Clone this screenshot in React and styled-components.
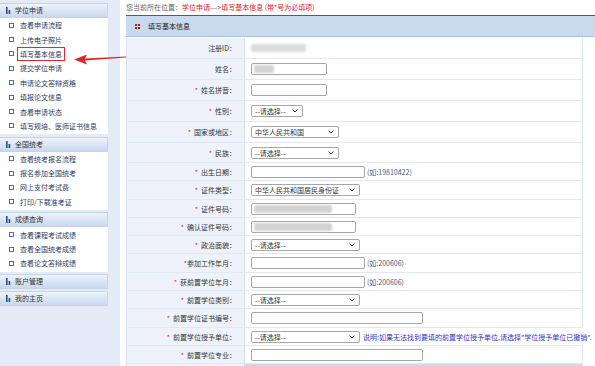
import React from 'react';
import styled, { createGlobalStyle } from 'styled-components';

const GlobalStyle = createGlobalStyle`
  html, body { margin: 0; padding: 0; background: #fff; }
  body { font-family: "Noto Sans CJK SC", "Noto Sans", sans-serif; font-size: 7px; color: #333; }
  * { box-sizing: border-box; }
`;

const Page = styled.div`
  position: relative;
  display: flex;
  width: 595px;
  height: 366px;
  overflow: hidden;
`;

const Sidebar = styled.aside`
  flex: none;
  width: 120px;
  height: 366px;
  background: #e4ebf6;
  padding: 3px 12px 0 0;
`;

const Group = styled.div`
  margin-bottom: 2.4px;
  background: #fff;
`;

const GroupHeader = styled.div`
  height: 15px;
  display: flex;
  align-items: center;
  gap: 4px;
  padding-left: 6px;
  background: linear-gradient(#eef3fb, #c8d8ee);
  border: 1px solid #c4d4ea;
  border-left: none;
  color: #333;
  font-size: 7px;
  line-height: 1;
`;

const ItemList = styled.ul`
  list-style: none;
  margin: 0;
  padding: 0 0 1px;
`;

const Item = styled.li`
  height: 14.4px;
  display: flex;
  align-items: center;
  padding-left: 9px;
  color: #2c3d60;
  font-size: 7px;
`;

const Bullet = styled.span`
  width: 5px;
  height: 5px;
  border: 1px solid #4a6ea8;
  margin-right: 6px;
  flex: none;
`;

const ItemText = styled.span`
  display: inline-flex;
  align-items: center;
  height: 14px;
  padding: 0 2px;
  margin-left: -3px;
  border: 1px solid ${p => (p.$marked ? '#e8262a' : 'transparent')};
`;

const Main = styled.main`
  flex: 1;
  min-width: 0;
  padding-left: 6px;
  background: #fff;
`;

const Breadcrumb = styled.div`
  height: 15px;
  padding-top: 2px;
  line-height: 10px;
  color: #666;
  font-size: 7px;
`;

const Red = styled.span`
  color: #e5232a;
`;

const PanelHeader = styled.div`
  height: 22px;
  display: flex;
  align-items: center;
  gap: 8px;
  padding-left: 9px;
  background: #c9daee;
  border-top: 1.5px solid #2c6a8a;
  border-bottom: 1.5px solid #a9c3e2;
  color: #222;
  font-size: 7px;
  margin-bottom: 1px;
`;

const Table = styled.div`
  width: 457px;
  border-left: 1px solid #dde7f4;
  border-right: 1px solid #dde7f4;
`;

const Row = styled.div`
  display: grid;
  grid-template-columns: 118px 1fr;
  height: ${p => p.$h}px;
  border-bottom: 1px solid #dfe8f5;
`;

const LabelCell = styled.div`
  display: flex;
  align-items: center;
  justify-content: flex-end;
  padding-right: 8px;
  background: #eef3fb;
  border-right: 1px solid #d3dff0;
  color: #333;
  font-size: 7px;
  white-space: nowrap;
`;

const Req = styled.span`
  color: #e5232a;
  margin-right: ${p => (p.$tight ? 0 : 3)}px;
`;

const ValueCell = styled.div`
  display: flex;
  align-items: center;
  gap: 2px;
  padding-left: 6px;
  background: ${p => (p.$tint ? '#c9daee' : '#fff')};
  white-space: nowrap;
`;

const InputBox = styled.div`
  width: ${p => p.$w}px;
  height: 12px;
  flex: none;
  display: flex;
  align-items: center;
  padding-left: 2px;
  border: 1px solid #a6a6a6;
  border-radius: 2px;
  background: #fff;
`;

const SelectBox = styled.div`
  width: ${p => p.$w}px;
  height: 12px;
  flex: none;
  display: flex;
  align-items: center;
  justify-content: space-between;
  padding: 0 4px 0 3px;
  border: 1px solid #a6a6a6;
  border-radius: 2px;
  background: #fff;
  color: #333;
  font-size: 7px;
`;

const Blur = styled.span`
  display: inline-block;
  width: ${p => p.$w}px;
  height: 8px;
  border-radius: 2px;
  background: ${p => p.$c || '#d6d6d6'};
  filter: blur(1.2px);
`;

const Hint = styled.span`
  color: #4a5c80;
  font-size: 7px;
`;

const Note = styled.span`
  margin-left: 1px;
  color: #3434c6;
  font-size: 7px;
`;

const Arrow = styled.svg`
  position: absolute;
  left: 70px;
  top: 50px;
  pointer-events: none;
`;

const BarIcon = () => (
  <svg width="5" height="7" viewBox="0 0 5 7">
    <rect x="0" y="0" width="1.6" height="7" fill="#2a4f86" />
    <rect x="2.6" y="3" width="1.6" height="4" fill="#2a4f86" />
  </svg>
);

const GridIcon = () => (
  <svg width="5" height="5" viewBox="0 0 5 5">
    <rect x="0" y="0" width="2" height="2" fill="#c0141c" />
    <rect x="3" y="0" width="2" height="2" fill="#c0141c" />
    <rect x="0" y="3" width="2" height="2" fill="#c0141c" />
    <rect x="3" y="3" width="2" height="2" fill="#c0141c" />
  </svg>
);

const Chevron = () => (
  <svg width="6" height="4" viewBox="0 0 6 4">
    <polyline points="0.6,0.6 3,3 5.4,0.6" fill="none" stroke="#333" strokeWidth="1" />
  </svg>
);

const groups = [
  {
    title: '学位申请',
    items: ['查看申请流程', '上传电子照片', '填写基本信息', '提交学位申请', '申请论文答辩资格', '填报论文信息', '查看申请状态', '填写规培、医师证书信息'],
  },
  { title: '全国统考', items: ['查看统考报名流程', '报名参加全国统考', '网上支付考试费', '打印/下载准考证'] },
  { title: '成绩查询', items: ['查看课程考试成绩', '查看全国统考成绩', '查看论文答辩成绩'] },
  { title: '账户管理', items: [] },
  { title: '我的主页', items: [] },
];

const PICK = '--请选择--';

const rows = [
  { label: '注册ID：', h: 21, kind: 'blur' },
  { label: '姓名：', h: 21, kind: 'input', w: 76, blur: 20 },
  { label: '姓名拼音：', req: true, h: 21, kind: 'input', w: 76 },
  { label: '性别：', req: true, h: 21, kind: 'select', w: 52, text: PICK },
  { label: '国家或地区：', req: true, h: 21, kind: 'select', w: 88, text: '中华人民共和国' },
  { label: '民族：', req: true, h: 20, kind: 'select', w: 88, text: PICK },
  { label: '出生日期：', req: true, h: 18, kind: 'input', w: 114, hint: '(如:19810422)' },
  { label: '证件类型：', req: true, h: 19, kind: 'select', w: 109, text: '中华人民共和国居民身份证' },
  { label: '证件号码：', req: true, h: 18, kind: 'input', w: 105, blur: 78 },
  { label: '确认证件号码：', req: true, h: 18, kind: 'input', w: 105, blur: 78 },
  { label: '政治面貌：', req: true, h: 18, kind: 'select', w: 109, text: PICK },
  { label: '参加工作年月：', req: true, tight: true, h: 19, kind: 'input', w: 114, hint: '(如:200606)' },
  { label: '获前置学位年月：', req: true, h: 18, kind: 'input', w: 114, hint: '(如:200606)' },
  { label: '前置学位类别：', req: true, h: 18, kind: 'select', w: 109, text: PICK },
  { label: '前置学位证书编号：', req: true, h: 19, kind: 'input', w: 172 },
  {
    label: '前置学位授予单位：', req: true, h: 18, kind: 'select', w: 109, text: PICK,
    note: '说明:如果无法找到要填的前置学位授予单位,请选择"学位授予单位已撤销".',
  },
  { label: '前置学位专业：', req: true, h: 18, kind: 'input', w: 172 },
  { label: '', h: 18, kind: 'empty' },
];

function Field({ row }) {
  if (row.kind === 'blur') return <Blur $w={55} $c="#dcdcdc" />;
  if (row.kind === 'input')
    return (
      <InputBox $w={row.w}>
        {row.blur ? <Blur $w={row.blur} $c="#d2d2d2" /> : null}
      </InputBox>
    );
  if (row.kind === 'select')
    return (
      <SelectBox $w={row.w}>
        <span>{row.text}</span>
        <Chevron />
      </SelectBox>
    );
  return null;
}

export default function App() {
  return (
    <>
      <GlobalStyle />
      <Page>
        <Sidebar>
          {groups.map(g => (
            <Group key={g.title}>
              <GroupHeader>
                <BarIcon />
                <span>{g.title}</span>
              </GroupHeader>
              {g.items.length > 0 && (
                <ItemList>
                  {g.items.map(it => (
                    <Item key={it}>
                      <Bullet />
                      <ItemText $marked={it === '填写基本信息'}>{it}</ItemText>
                    </Item>
                  ))}
                </ItemList>
              )}
            </Group>
          ))}
        </Sidebar>
        <Main>
          <Breadcrumb>
            您当前所在位置：<Red>学位申请---&gt;填写基本信息 (带*号为必填项)</Red>
          </Breadcrumb>
          <PanelHeader>
            <GridIcon />
            <span>填写基本信息</span>
          </PanelHeader>
          <Table>
            {rows.map((r, i) => (
              <Row key={i} $h={r.h}>
                <LabelCell>
                  {r.req && <Req $tight={r.tight}>*</Req>}
                  {r.label}
                </LabelCell>
                <ValueCell $tint={r.kind === 'empty'}>
                  <Field row={r} />
                  {r.hint && <Hint>{r.hint}</Hint>}
                  {r.note && <Note>{r.note}</Note>}
                </ValueCell>
              </Row>
            ))}
          </Table>
        </Main>
        <Arrow width="76" height="16" viewBox="0 0 76 16">
          <polygon points="4,9.5 17,4.5 15,8.6 56,6.4 56,7.6 15,10.6 17,14.5" fill="#e5232a" />
        </Arrow>
      </Page>
    </>
  );
}
